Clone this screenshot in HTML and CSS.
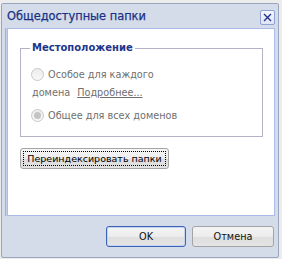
FILE: index.html
```html
<!DOCTYPE html>
<html>
<head>
<meta charset="utf-8">
<link rel="stylesheet" href="styles.css">
</head>
<body>
<div class="dialog">
  <div class="titlebar">
    <span class="title">Общедоступные папки</span>
    <span class="close">
      <svg width="9" height="9" viewBox="0 0 9 9"><path d="M1 1L8 8M8 1L1 8" stroke="#23328a" stroke-width="1.4"/></svg>
    </span>
  </div>
  <div class="pane">
    <fieldset class="group">
      <legend>Местоположение</legend>
      <div class="row"><span class="radio"></span><span>Особое для каждого</span></div>
      <div class="row2"><span>домена</span><span class="link">Подробнее...</span></div>
      <div class="row row3"><span class="radio checked"></span><span>Общее для всех доменов</span></div>
    </fieldset>
    <div class="reindex"><span class="focus">Переиндексировать папки</span></div>
  </div>
  <div class="footer">
    <div class="btn default">OK</div>
    <div class="btn cancel">Отмена</div>
  </div>
</div>
</body>
</html>
```
FILE: styles.css
```css
html, body { margin: 0; padding: 0; }
body {
  background: #ececec;
  width: 282px;
  height: 259px;
  padding: 3px 0 0 1px;
  box-sizing: border-box;
  font-family: "DejaVu Sans", Verdana, sans-serif;
  font-size: 9.7px;
}
.dialog {
  width: 278px;
  height: 255px;
  box-sizing: border-box;
  border: 1px solid #9aa6bd;
  border-radius: 2px;
  background: #d4dce9;
  display: flex;
  flex-direction: column;
}
.titlebar {
  height: 24px;
  display: flex;
  align-items: center;
  justify-content: space-between;
  padding: 0 3px 0 5px;
  flex: none;
}
.title {
  color: #1a3085;
  font-size: 11.4px;
  margin-top: -1px;
  -webkit-text-stroke: 0.25px #1a3085;
}
.close {
  width: 13px;
  height: 13px;
  border: 1px solid #8ea2d8;
  border-radius: 2px;
  background: linear-gradient(#f4f6fc, #dfe6f6);
  display: flex;
  align-items: center;
  justify-content: center;
  margin-top: 2px;
}
.pane {
  flex: 1;
  margin: 0 3px 0 5px;
  background: #fff;
  border: 1px solid #a9bbe6;
  box-shadow: -1px 0 0 #c5d0ef, -2px 0 0 #9eb0d8;
  padding: 12px 11px 0 12px;
}
.group {
  margin: 0;
  border: 1px solid #b4b2c6;
  padding: 10px 0 12px 9px;
  color: #6f6f6f;
}
.group legend {
  color: #1d358a;
  font-weight: bold;
  font-size: 10px;
  line-height: 14px;
  padding: 0 2px;
}
.row {
  display: flex;
  align-items: center;
  height: 18px;
  padding-left: 1px;
}
.row2 {
  display: flex;
  align-items: center;
  height: 18px;
  padding-left: 2px;
}
.row3 { margin-top: 5px; }
.link {
  text-decoration: underline;
  margin-left: 7px;
}
.radio {
  width: 11px;
  height: 11px;
  border: 1px solid #c9c9c9;
  border-radius: 50%;
  background: linear-gradient(#ececec, #f8f8f8);
  margin-right: 4px;
  display: flex;
  align-items: center;
  justify-content: center;
}
.radio.checked::after {
  content: "";
  width: 7px;
  height: 7px;
  border-radius: 50%;
  background: #c4c4c4;
}
.reindex {
  margin-top: 11px;
  width: 149px;
  height: 21px;
  box-sizing: border-box;
  border: 1px solid #a4a4a4;
  border-radius: 3px;
  background: linear-gradient(#f6f6f6 0, #ececec 50%, #dcdcdc 51%, #e2e2e2 100%);
  padding: 2px;
  color: #000;
  white-space: nowrap;
}
.focus {
  display: flex;
  align-items: center;
  justify-content: center;
  height: 100%;
  box-sizing: border-box;
  border: 1px dotted #000;
  font-size: 9.5px;
}
.footer {
  height: 41px;
  flex: none;
  display: flex;
  justify-content: flex-end;
  align-items: flex-start;
  padding: 10px 4px 0 0;
  gap: 6px;
  box-sizing: border-box;
}
.btn {
  height: 21px;
  box-sizing: border-box;
  border: 1px solid #a4a4a4;
  border-radius: 3px;
  background: linear-gradient(#f4f4f4 0, #ececec 50%, #dedede 51%, #e4e4e4 100%);
  display: flex;
  align-items: center;
  justify-content: center;
  color: #111;
}
.btn.default { width: 80px; border-color: #3d63b7; box-shadow: inset 0 0 0 1px #c3d3f2; }
.btn.cancel { width: 82px; }
```
